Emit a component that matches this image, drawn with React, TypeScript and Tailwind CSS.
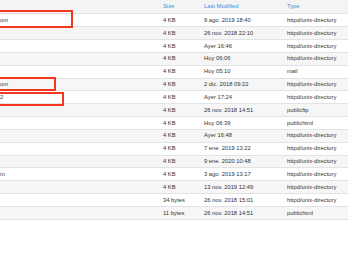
import React from 'react';

interface FileRow {
  name: string;
  size: string;
  modified: string;
  type: string;
}

const ROWS: FileRow[] = [
  { name: 'om', size: '4 KB', modified: '9 ago. 2019 18:40', type: 'httpd/unix-directory' },
  { name: '', size: '4 KB', modified: '26 nov. 2018 22:10', type: 'httpd/unix-directory' },
  { name: '', size: '4 KB', modified: 'Ayer 16:46', type: 'httpd/unix-directory' },
  { name: '', size: '4 KB', modified: 'Hoy 06:06', type: 'httpd/unix-directory' },
  { name: '', size: '4 KB', modified: 'Hoy 05:10', type: 'mail' },
  { name: 'om', size: '4 KB', modified: '2 dic. 2018 09:22', type: 'httpd/unix-directory' },
  { name: '2', size: '4 KB', modified: 'Ayer 17:24', type: 'httpd/unix-directory' },
  { name: '', size: '4 KB', modified: '26 nov. 2018 14:51', type: 'publicftp' },
  { name: '', size: '4 KB', modified: 'Hoy 06:39', type: 'publichtml' },
  { name: '', size: '4 KB', modified: 'Ayer 16:48', type: 'httpd/unix-directory' },
  { name: '', size: '4 KB', modified: '7 ene. 2019 13:22', type: 'httpd/unix-directory' },
  { name: '', size: '4 KB', modified: '9 ene. 2020 10:48', type: 'httpd/unix-directory' },
  { name: 'm', size: '4 KB', modified: '3 ago. 2019 13:17', type: 'httpd/unix-directory' },
  { name: '', size: '4 KB', modified: '13 nov. 2019 12:49', type: 'httpd/unix-directory' },
  { name: '', size: '34 bytes', modified: '26 nov. 2018 15:01', type: 'httpd/unix-directory' },
  { name: '', size: '11 bytes', modified: '26 nov. 2018 14:51', type: 'publichtml' },
];

const cols = 'grid grid-cols-[163px_41px_83px_1fr] items-center';

export default function App() {
  return (
    <div className="relative w-[348px] h-[268px] bg-white overflow-hidden font-['Liberation_Sans',Arial,sans-serif] text-[5.8px] text-[#333]">
      <div className={`${cols} h-[13.3px] bg-[#f4f4f4] text-[#3d8fd6]`}>
        <span />
        <span>Size</span>
        <span>Last Modified</span>
        <span>Type</span>
      </div>
      {ROWS.map((r, i) => (
        <div
          key={i}
          className={`${cols} h-[12.85px] border-t border-[#e3e3e3] ${i % 2 === 1 ? 'bg-[#f6f6f6]' : 'bg-white'}`}
        >
          <span>{r.name}</span>
          <span>{r.size}</span>
          <span>{r.modified}</span>
          <span>{r.type}</span>
        </div>
      ))}
      <div className="border-t border-[#e3e3e3]" />

      {/* highlight boxes */}
      <div className="absolute left-[-4px] top-[10px] w-[77px] h-[18px] border-2 border-[#f2381f]" />
      <div className="absolute left-[-4px] top-[77px] w-[60px] h-[14px] border-2 border-[#f2381f]" />
      <div className="absolute left-[-4px] top-[91.5px] w-[68px] h-[14px] border-2 border-[#f2381f]" />
    </div>
  );
}
